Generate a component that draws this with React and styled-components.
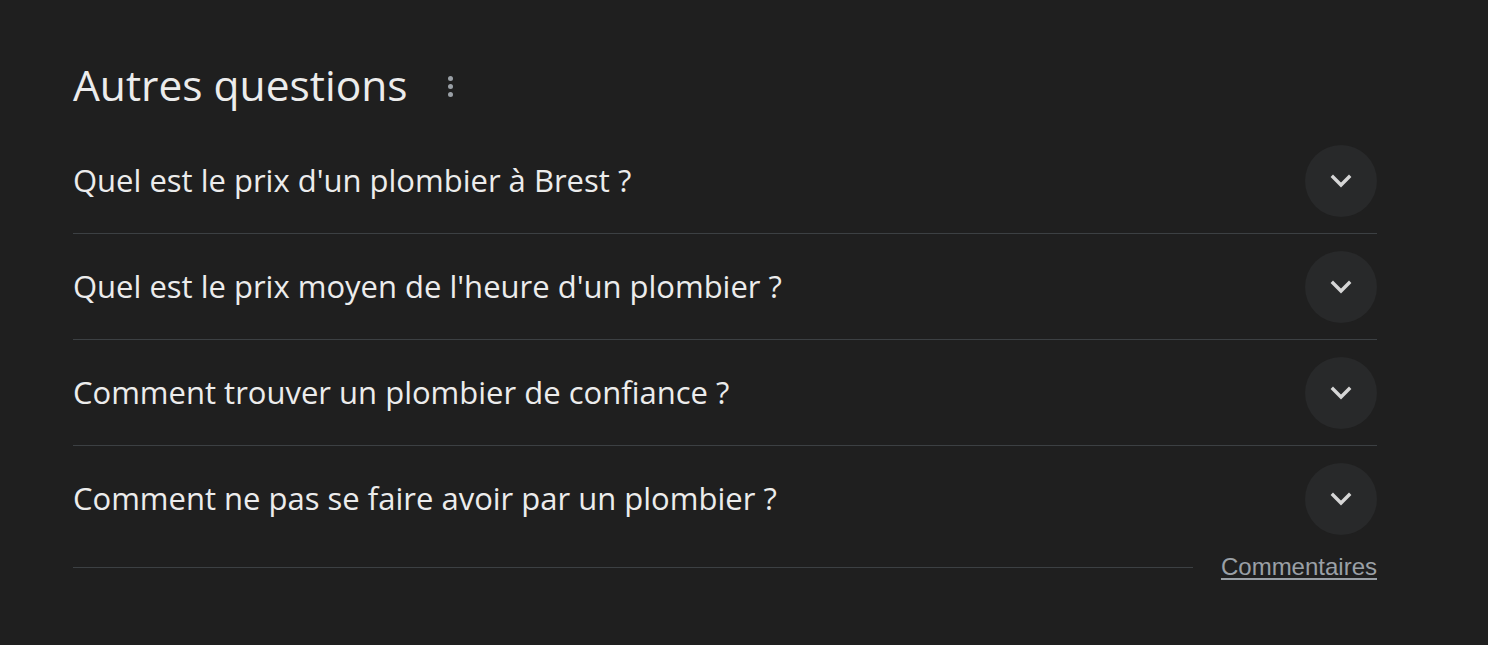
import React from "react";
import styled, { createGlobalStyle } from "styled-components";

const Global = createGlobalStyle`
  html, body { margin: 0; padding: 0; background: #1f1f1f; }
  body { font-family: "Open Sans", sans-serif; }
`;

const Page = styled.div`
  width: 1488px;
  height: 645px;
  background: #1f1f1f;
  box-sizing: border-box;
  padding: 56px 111px 0 73px;
`;

const Header = styled.div`
  display: flex;
  align-items: center;
  height: 58px;
  gap: 40px;
`;

const Title = styled.h2`
  margin: 0;
  font-family: "Open Sans", sans-serif;
  font-weight: 400;
  font-size: 42.5px;
  line-height: 58px;
  color: #ececec;
`;

const MenuButton = styled.div`
  display: flex;
  flex-direction: column;
  gap: 3px;
  padding-top: 2px;
  span {
    width: 5px;
    height: 5px;
    border-radius: 50%;
    background: #9aa0a6;
  }
`;

const List = styled.div`
  margin-top: 14px;
`;

const Row = styled.div`
  display: flex;
  align-items: center;
  justify-content: space-between;
  height: 105px;
  border-bottom: ${(p) => (p.$last ? "none" : "1px solid #3c4043")};
`;

const Question = styled.span`
  font-family: "Open Sans", sans-serif;
  font-size: 31px;
  line-height: 40px;
  color: #ececec;
  padding-bottom: 2px;
`;

const Circle = styled.div`
  width: 72px;
  height: 72px;
  border-radius: 50%;
  background: #28292a;
  display: flex;
  align-items: center;
  justify-content: center;
`;

const Footer = styled.div`
  display: flex;
  align-items: center;
  gap: 28px;
  margin-top: 2px;
`;

const Line = styled.div`
  flex: 1;
  height: 1px;
  background: #3c4043;
`;

const Feedback = styled.a`
  font-family: "Liberation Sans", Arial, sans-serif;
  font-size: 24px;
  color: #9aa0a6;
  text-decoration: underline;
  text-underline-offset: 3px;
`;

const Chevron = () => (
  <svg width="28" height="28" viewBox="0 0 28 28">
    <path d="M6 10l8 8 8-8" fill="none" stroke="#d6d6d6" strokeWidth="3.4" strokeLinecap="square" />
  </svg>
);

const questions = [
  "Quel est le prix d'un plombier à Brest ?",
  "Quel est le prix moyen de l'heure d'un plombier ?",
  "Comment trouver un plombier de confiance ?",
  "Comment ne pas se faire avoir par un plombier ?",
];

export default function App() {
  return (
    <Page>
      <Global />
      <Header>
        <Title>Autres questions</Title>
        <MenuButton>
          <span />
          <span />
          <span />
        </MenuButton>
      </Header>
      <List>
        {questions.map((q, i) => (
          <Row key={q} $last={i === questions.length - 1}>
            <Question>{q}</Question>
            <Circle>
              <Chevron />
            </Circle>
          </Row>
        ))}
      </List>
      <Footer>
        <Line />
        <Feedback>Commentaires</Feedback>
      </Footer>
    </Page>
  );
}
